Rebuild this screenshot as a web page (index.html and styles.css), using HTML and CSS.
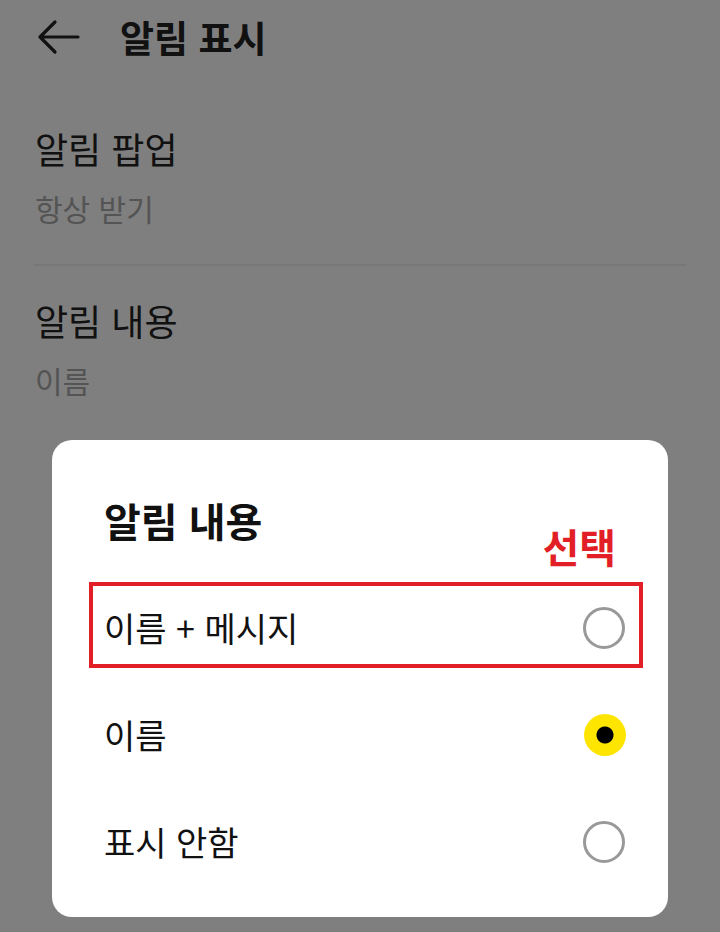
FILE: index.html
```html
<!DOCTYPE html>
<html lang="ko">
<head>
  <meta charset="UTF-8" />
  <meta name="viewport" content="width=device-width, initial-scale=1" />
  <title>알림 표시</title>
  <link rel="stylesheet" href="styles.css">
</head>
<body>
  <div class="screen">
    <div class="topbar">
      <svg class="back" width="44" height="36" viewBox="0 0 44 36">
        <path d="M42 18H4M19 3L4 18l15 15" fill="none" stroke="#222" stroke-width="3.2" stroke-linecap="round" stroke-linejoin="round"/>
      </svg>
      <h1>알림 표시</h1>
    </div>

    <div class="setting first">
      <div class="setting-title">알림 팝업</div>
      <div class="setting-value">항상 받기</div>
    </div>
    <div class="divider"></div>
    <div class="setting">
      <div class="setting-title">알림 내용</div>
      <div class="setting-value">이름</div>
    </div>
  </div>

  <div class="dim"></div>

  <div class="dialog">
    <h2>알림 내용</h2>
    <span class="pick-label">선택</span>
    <div class="options">
      <div class="option">
        <span>이름 + 메시지</span>
        <span class="radio"></span>
        <div class="pick-box"></div>
      </div>
      <div class="option">
        <span>이름</span>
        <span class="radio checked"></span>
      </div>
      <div class="option">
        <span>표시 안함</span>
        <span class="radio"></span>
      </div>
    </div>
  </div>
</body>
</html>
```

FILE: styles.css
```css
body {
  margin: 0;
  width: 720px;
  height: 932px;
  overflow: hidden;
  background: #fff;
  font-family: "Noto Sans CJK KR", "Noto Sans", sans-serif;
  color: #222;
  position: relative;
}
.screen {
  padding: 0 34px;
}
.topbar {
  display: flex;
  align-items: center;
  height: 74px;
}
.back {
  margin-left: 2px;
  margin-right: 40px;
}
h1 {
  margin: 0;
  font-size: 37px;
  font-weight: 700;
  line-height: 74px;
}
.setting {
  padding: 32px 1px 0;
}
.setting.first {
  padding-top: 52px;
}
.setting-title {
  font-size: 36px;
  line-height: 44px;
}
.setting-value {
  font-size: 30px;
  line-height: 40px;
  margin-top: 18px;
  color: #a8a8a8;
}
.divider {
  height: 2px;
  background: #efefef;
  margin: 36px 0 0;
}
.dim {
  position: absolute;
  inset: 0;
  background: rgba(0, 0, 0, 0.5);
}
.dialog {
  position: absolute;
  left: 52px;
  top: 440px;
  width: 616px;
  box-sizing: border-box;
  padding: 56px 42px 22px 52px;
  background: #fff;
  border-radius: 20px;
  color: #111;
}
h2 {
  margin: 0;
  font-size: 40px;
  font-weight: 700;
  line-height: 48px;
}
.pick-label {
  position: absolute;
  right: 52px;
  top: 84px;
  font-size: 40px;
  font-weight: 700;
  line-height: 44px;
  color: #e21f26;
}
.options {
  margin-top: 30px;
}
.option {
  position: relative;
  display: flex;
  align-items: center;
  justify-content: space-between;
  height: 107px;
  font-size: 34px;
}
.radio {
  width: 36px;
  height: 36px;
  border: 3px solid #999;
  border-radius: 50%;
  margin-right: 1px;
}
.radio.checked {
  width: 42px;
  height: 42px;
  border: none;
  margin-right: 0;
  background: radial-gradient(circle, #000 0 8px, #fde500 9px);
}
.pick-box {
  position: absolute;
  left: -15px;
  right: -17px;
  top: 8px;
  bottom: 13px;
  border: 4px solid #e21f26;
}
```
